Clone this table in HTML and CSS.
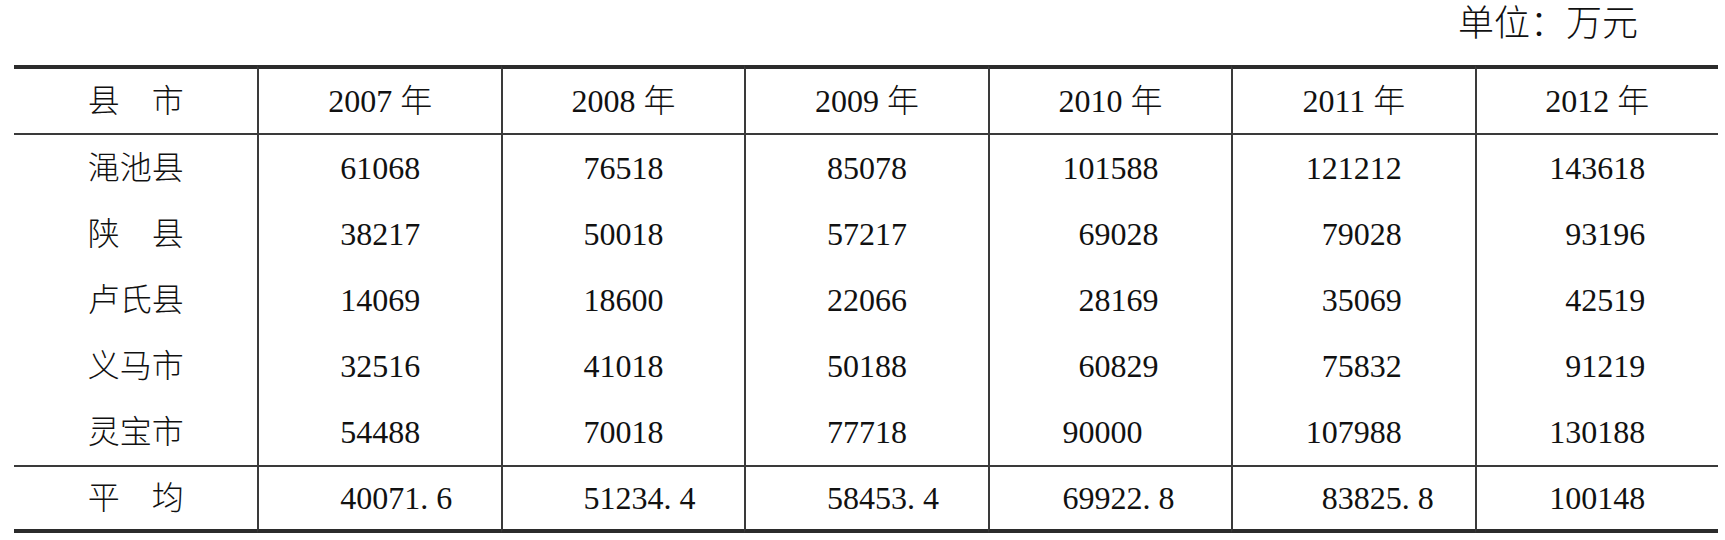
FILE: index.html
```html
<!DOCTYPE html>
<html lang="zh-CN">
<head>
    <meta charset="UTF-8">
    <meta name="viewport" content="width=device-width, initial-scale=1.0">
    <title>各县市财政收入 2007-2012</title>
    <link rel="stylesheet" href="styles.css">
</head>
<body>
    <div class="page">
        <div class="unit">单位：万元</div>

        <table class="data-table">
            <thead>
                <tr>
                    <th>县　市</th>
                    <th>2007 年</th>
                    <th>2008 年</th>
                    <th>2009 年</th>
                    <th>2010 年</th>
                    <th>2011 年</th>
                    <th>2012 年</th>
                </tr>
            </thead>
            <tbody>
                <tr>
                    <td class="name">渑池县</td>
                    <td><span class="int w5">61068</span></td>
                    <td><span class="int w5">76518</span></td>
                    <td><span class="int w5">85078</span></td>
                    <td><span class="int w6">101588</span></td>
                    <td><span class="int w6">121212</span></td>
                    <td><span class="int w6">143618</span></td>
                </tr>
                <tr>
                    <td class="name">陕　县</td>
                    <td><span class="int w5">38217</span></td>
                    <td><span class="int w5">50018</span></td>
                    <td><span class="int w5">57217</span></td>
                    <td><span class="int w6">69028</span></td>
                    <td><span class="int w6">79028</span></td>
                    <td><span class="int w6">93196</span></td>
                </tr>
                <tr>
                    <td class="name">卢氏县</td>
                    <td><span class="int w5">14069</span></td>
                    <td><span class="int w5">18600</span></td>
                    <td><span class="int w5">22066</span></td>
                    <td><span class="int w6">28169</span></td>
                    <td><span class="int w6">35069</span></td>
                    <td><span class="int w6">42519</span></td>
                </tr>
                <tr>
                    <td class="name">义马市</td>
                    <td><span class="int w5">32516</span></td>
                    <td><span class="int w5">41018</span></td>
                    <td><span class="int w5">50188</span></td>
                    <td><span class="int w6">60829</span></td>
                    <td><span class="int w6">75832</span></td>
                    <td><span class="int w6">91219</span></td>
                </tr>
                <tr>
                    <td class="name">灵宝市</td>
                    <td><span class="int w5">54488</span></td>
                    <td><span class="int w5">70018</span></td>
                    <td><span class="int w5">77718</span></td>
                    <td><span class="int w6 lead">90000</span></td>
                    <td><span class="int w6">107988</span></td>
                    <td><span class="int w6">130188</span></td>
                </tr>
            </tbody>
            <tfoot>
                <tr class="avg">
                    <td class="name">平　均</td>
                    <td><span class="int w5">40071</span><span class="dec">. 6</span></td>
                    <td><span class="int w5">51234</span><span class="dec">. 4</span></td>
                    <td><span class="int w5">58453</span><span class="dec">. 4</span></td>
                    <td><span class="int w6 lead">69922. 8</span></td>
                    <td><span class="int w6">83825</span><span class="dec">. 8</span></td>
                    <td><span class="int w6">100148</span></td>
                </tr>
            </tfoot>
        </table>
    </div>
</body>
</html>
```

FILE: styles.css
```css
* {
    margin: 0;
    padding: 0;
    box-sizing: border-box;
}

body {
    background: #fff;
    color: #111;
    font-family: "Liberation Serif", "Noto Sans CJK SC", serif;
    font-weight: 300;
}

.page {
    width: 1718px;
    padding-left: 14px;
}

.unit {
    padding-top: 6px;
    padding-right: 80px;
    margin-bottom: 23px;
    text-align: right;
    font-size: 36px;
    line-height: 36px;
}

.data-table {
    width: 100%;
    table-layout: fixed;
    border-collapse: separate;
    border-spacing: 0;
    font-size: 32px;
}

.data-table th,
.data-table td {
    box-sizing: content-box;
    padding: 0;
    text-align: center;
    font-weight: 300;
    white-space: nowrap;
    line-height: 1;
}

.data-table th + th,
.data-table td + td {
    border-left: 2px solid #3a3a3a;
}

.data-table th {
    height: 64px;
    border-top: 4px solid #2b2b2b;
    border-bottom: 2px solid #3a3a3a;
}

.data-table td {
    height: 66px;
}

.avg td {
    height: 62px;
    border-top: 2px solid #3a3a3a;
    border-bottom: 4px solid #2b2b2b;
}

/* integer part keeps a fixed width so the digits line up on the right */
.int {
    display: inline-block;
    text-align: right;
}

.w5 {
    width: 2.5em;
}

.w6 {
    width: 3em;
}

/* a few cells in the source sit flush left instead */
.lead {
    text-align: left;
}

/* decimal part hangs past the integer column */
.dec {
    display: inline-block;
    width: 0;
    white-space: pre;
}
```
